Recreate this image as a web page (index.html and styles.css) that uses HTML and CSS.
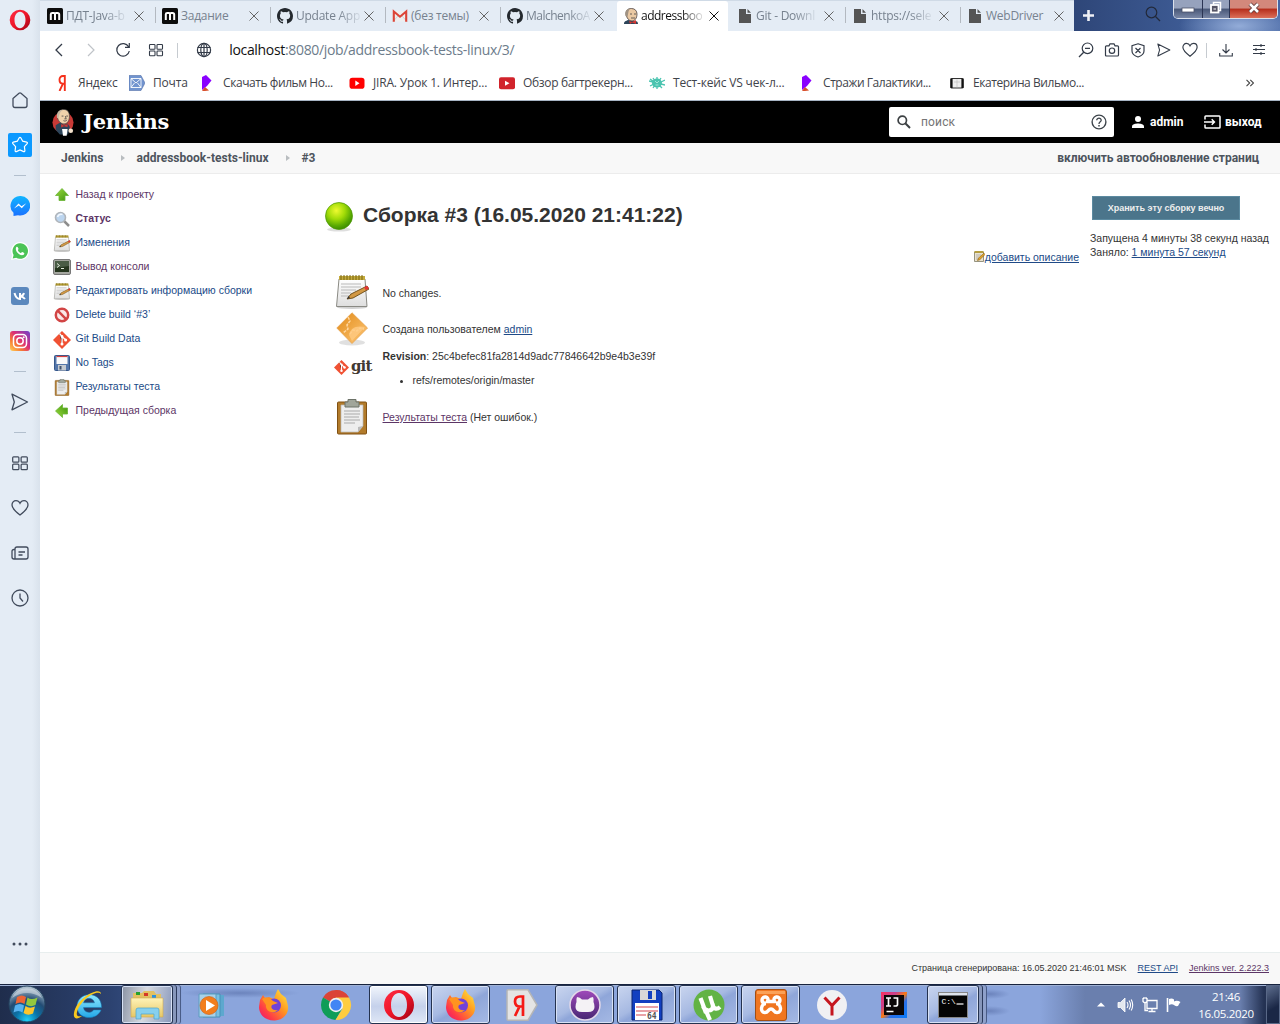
FILE: index.html
```html
<!DOCTYPE html>
<html lang="ru">
<head>
<meta charset="utf-8">
<title>addressbook-tests-linux #3 [Jenkins]</title>
<link rel="stylesheet" href="styles.css">
</head>
<body>
<svg class="defs" aria-hidden="true">
<defs>
<linearGradient id="gOpera" x1="0" y1="0" x2="1" y2="1"><stop offset="0" stop-color="#ff2d45"/><stop offset=".5" stop-color="#ee1528"/><stop offset="1" stop-color="#9c0014"/></linearGradient>
<linearGradient id="gMsg" x1="0" y1="0" x2="0" y2="1"><stop offset="0" stop-color="#10b5ff"/><stop offset="1" stop-color="#1a72ff"/></linearGradient>
<linearGradient id="gInsta" x1="0" y1="1" x2="1" y2="0"><stop offset="0" stop-color="#ffd35a"/><stop offset=".3" stop-color="#f77b34"/><stop offset=".55" stop-color="#dd2f75"/><stop offset="1" stop-color="#6b41cf"/></linearGradient>
<linearGradient id="gGreen" x1="0" y1="0" x2="1" y2="1"><stop offset="0" stop-color="#9bdb3c"/><stop offset="1" stop-color="#3f9410"/></linearGradient>
<radialGradient id="gBall" cx=".4" cy=".3" r=".7"><stop offset="0" stop-color="#eefa30"/><stop offset=".45" stop-color="#a2dc08"/><stop offset=".8" stop-color="#5aaa02"/><stop offset="1" stop-color="#3f8f02"/></radialGradient>
<radialGradient id="gOrb" cx=".5" cy=".95" r=".9"><stop offset="0" stop-color="#1ed0f8"/><stop offset=".35" stop-color="#0a73a8"/><stop offset=".65" stop-color="#234c74"/><stop offset="1" stop-color="#a9bccb"/></radialGradient>
<linearGradient id="gIe" x1="0" y1="0" x2="0" y2="1"><stop offset="0" stop-color="#8fe8ff"/><stop offset="1" stop-color="#23a7e8"/></linearGradient>
<linearGradient id="gFox" x1="1" y1="0" x2="0" y2="1"><stop offset="0" stop-color="#fff24a"/><stop offset=".4" stop-color="#ff9a20"/><stop offset=".75" stop-color="#ff3a47"/><stop offset="1" stop-color="#e2127d"/></linearGradient>
<linearGradient id="gGh" x1="0" y1="0" x2="0" y2="1"><stop offset="0" stop-color="#a14abb"/><stop offset="1" stop-color="#462672"/></linearGradient>
<linearGradient id="gDia" x1="0" y1="0" x2="1" y2="1"><stop offset="0" stop-color="#e18a17"/><stop offset="1" stop-color="#ffc878"/></linearGradient>
<linearGradient id="gPaper" x1="0" y1="0" x2="0" y2="1"><stop offset="0" stop-color="#fff"/><stop offset="1" stop-color="#dedede"/></linearGradient>
<linearGradient id="gFolder" x1="0" y1="0" x2="0" y2="1"><stop offset="0" stop-color="#fff3b8"/><stop offset="1" stop-color="#e6c766"/></linearGradient>
<linearGradient id="gIj" x1="0" y1="0" x2="1" y2="1"><stop offset="0" stop-color="#fe315d"/><stop offset=".3" stop-color="#c8408f"/><stop offset=".5" stop-color="#f97a12"/><stop offset=".65" stop-color="#2a6fe8"/><stop offset="1" stop-color="#087cfa"/></linearGradient>

<symbol id="i-x" viewBox="0 0 10 10"><path d="M.5.5l9 9M9.500.5l-9 9" fill="none" stroke="currentColor" stroke-width="1"/></symbol>
<symbol id="i-m" viewBox="0 0 16 16"><rect width="16" height="16" rx="1.500" fill="#0c0c0c"/><path d="M3.800 12V6.300c0-1 .7-1.300 1.500-1.300H7c.8 0 1 .5 1 1.300V12M8 6.300C8 5.400 8.500 5 9.200 5h1.300c1 0 1.700.5 1.700 1.500V12" fill="none" stroke="#fff" stroke-width="2"/></symbol>
<symbol id="i-gh" viewBox="0 0 16 16"><path fill="#24292e" d="M8 0C3.580 0 0 3.580 0 8c0 3.540 2.290 6.530 5.470 7.590.4.070.55-.17.55-.38v-1.490c-2.230.48-2.690-.94-2.690-.94-.36-.93-.89-1.170-.89-1.170-.73-.5.05-.49.05-.49.81.06 1.230.83 1.230.83.72 1.230 1.880.87 2.340.67.070-.52.28-.87.51-1.070-1.780-.2-3.640-.89-3.640-3.950 0-.87.31-1.590.82-2.150-.08-.2-.36-1.020.08-2.120 0 0 .67-.21 2.200.82a7.600 7.600 0 0 1 4 0c1.530-1.040 2.200-.82 2.200-.82.44 1.100.16 1.920.08 2.120.51.56.82 1.270.82 2.150 0 3.070-1.870 3.750-3.650 3.950.29.25.54.73.54 1.480v2.200c0 .21.15.46.55.38A8 8 0 0 0 16 8c0-4.420-3.580-8-8-8z"/></symbol>
<symbol id="i-gmail" viewBox="0 0 16 16"><path d="M1 3h14v10.500H1z" fill="#eee"/><path d="M1 13.500L6 8M15 13.500L10 8" stroke="#ccc" stroke-width=".8"/><path d="M1.800 13.800V3.500L8 8.700l6.200-5.200v10.300" fill="none" stroke="#dc4437" stroke-width="2.100"/></symbol>
<symbol id="i-file" viewBox="0 0 16 16"><path d="M2 1h7v5h5v9H2zM10.500 1L14 4.800h-3.500z" fill="#555"/></symbol>
<symbol id="i-butler" viewBox="0 0 24 30"><circle cx="12" cy="15" r="11.500" fill="#c93a36"/><path d="M6 9C6 3 9 .8 13 .8S19 4 19 8c0 5-2 8.500-6 8.500S6 12 6 9z" fill="#efd2ab" stroke="#444" stroke-width=".8"/><path d="M5.500 10C4.500 4 7.500 1 11.500 1 9 3 8.500 5 7 10z" fill="#c7b8a3"/><path d="M4 18l5-3 4 3 4-2 2.500 4-2 8-9 0-4.500-5z" fill="#2d455a"/><path d="M10 16.500l3 2 4-2v3.500l-4-1-3 1.500z" fill="#d33833"/><path d="M11 22h6l-1 7.500h-4z" fill="#fff"/><circle cx="20.500" cy="24" r="2.500" fill="#f4e2cc"/><path d="M10.500 8h2m3 0h2m-5 5c2 1 3 0 4-1M14.500 8l1 3h-2" stroke="#444" stroke-width=".9" fill="none"/></symbol>
<symbol id="i-butlerhead" viewBox="0 0 16 16"><path d="M1 16c0-3 2-3 4-4l7 1c2 0 3 1 3 3z" fill="#2d455a"/><path d="M3 6C3 2 5 .5 8.500.5S14 3 14 6c0 4-2 7-5 7S3.500 10 3 6z" fill="#eac9a3" stroke="#494040" stroke-width=".8"/><path d="M2.500 8C1.500 3 4 1 7 .8 5 3 5.500 5 4.500 9z" fill="#a19383"/><path d="M6 13l3 1 4-2v4l-4-1.500L7 16z" fill="#d33833"/><path d="M7 6h2m2 0h2M8 10h4" stroke="#444" stroke-width=".8"/></symbol>
<symbol id="i-grid" viewBox="0 0 16 16"><g fill="none" stroke="currentColor" stroke-width="1.100"><rect x="1.500" y="2.500" width="5.500" height="4.800" rx=".8"/><rect x="9" y="2.500" width="5.500" height="4.800" rx=".8"/><rect x="1.500" y="9" width="5.500" height="4.800" rx=".8"/><rect x="9" y="9" width="5.500" height="4.800" rx=".8"/></g></symbol>
<symbol id="i-send" viewBox="0 0 18 18"><path d="M1 1.200L16.500 9 1 16.800 3.300 9z" fill="none" stroke="currentColor" stroke-width="1.300" stroke-linejoin="round"/></symbol>
<symbol id="i-heart" viewBox="0 0 18 18"><path d="M9 16C5 13 1 9.500 1 6c0-2.500 1.700-4.400 4-4.400 1.800 0 3.200 1 4 2.700.8-1.700 2.200-2.700 4-2.700 2.300 0 4 1.900 4 4.400 0 3.500-4 7-8 10z" fill="none" stroke="currentColor" stroke-width="1.300"/></symbol>
<symbol id="i-purple" viewBox="0 0 16 16"><path d="M3 2l4-2 5.500 5.500L8 11l-5 4z" fill="#8a00ff"/><path d="M3 16l3-4 4 3.500-4 .5z" fill="#d8502c"/></symbol>
<symbol id="i-notepad" viewBox="0 0 34 34"><ellipse cx="17" cy="32.500" rx="15" ry="1.500" fill="#000" opacity=".18"/><path d="M4 4h26l2 27.500H1.500z" fill="url(#gPaper)" stroke="#8a8a84" stroke-width="1"/><path d="M4 1h26v4H4z" fill="#c3aa3d"/><path d="M6 0v5m3-5v5m3-5v5m3-5v5m3-5v5m3-5v5m3-5v5m3-5v5" stroke="#796411" stroke-width="1"/><path d="M6 9h20M6 12h20M6 15h15M6 18h10M6 21h9" stroke="#b9b9b9"/><path d="M12 24l4-5L32 11l2 3-16 9z" fill="#d29844" stroke="#684713" stroke-width=".9"/><path d="M29 12.500l3-1.800 2 2.500-3 2z" fill="#e23434"/><path d="M12 24l3-1-1.500-2z" fill="#333"/></symbol>
<symbol id="i-clip" viewBox="0 0 34 36"><rect x="2.500" y="3" width="29" height="32" rx="1" fill="#b27b2b" stroke="#805012"/><path d="M6 6h22v21l-5 6H6z" fill="#eee" stroke="#b8b8b8" stroke-width=".7"/><path d="M28 27l-5 6v-5z" fill="#bbb"/><path d="M9 12h16M9 15h16M9 18h15M9 21h16M9 24h11" stroke="#aaa" stroke-width="1.100"/><path d="M10 3h3V.5h8V3h3v5H10z" fill="#a0a59a" stroke="#6c7268"/></symbol>
<symbol id="i-git" viewBox="0 0 18 18"><path d="M9 0l9 9-9 9-9-9z" fill="#f05133"/><path d="M6.500 2.500L9 5.500v7M9 5.500l3.500 3.200" stroke="#fff" stroke-width="1.300"/><circle cx="9" cy="13" r="1.500" fill="#fff"/><circle cx="12.600" cy="9" r="1.500" fill="#fff"/><circle cx="9" cy="5.500" r="1.400" fill="#fff"/></symbol>
<symbol id="i-up" viewBox="0 0 16 16"><path d="M8 1.500l6.500 7h-3.500V13.500H5V8.500H1.500z" fill="url(#gGreen)" stroke="#6bb536" stroke-width=".8"/></symbol>
<symbol id="i-fox" viewBox="0 0 32 32"><path d="M2 11l3-5 2 3 4-1 5 2 2-6 2-4 3 5 5 4 2 8c1 8-5 14-13 14.500C8 32 1 26 1 18z" fill="url(#gFox)"/><circle cx="16" cy="16.500" r="7" fill="#7142d8"/><path d="M4 10c4-3 8-1 11 2l5 2-6 2c-2 3 1 6 6 5-5 5-13 1-12-5z" fill="#ff9420"/></symbol>
<symbol id="i-oo" viewBox="0 0 32 32"><path fill="url(#gOpera)" fill-rule="evenodd" d="M16 1a15 15 0 1 0 0 30 15 15 0 0 0 0-30zm0 3c5 0 8 5.400 8 12s-3 12-8 12-8-5.400-8-12 3-12 8-12z"/></symbol>
</defs>
</svg>

<div class="window">
  <aside class="rail">
    <div class="rail-logo"><svg width="22" height="22"><use href="#i-oo"/></svg></div>
    <div class="rail-item"><svg width="18" height="18" viewBox="0 0 18 18"><path d="M2 7.500L8 2.300q1-.8 2 0l6 5.200v7q0 2-2 2H4q-2 0-2-2z" fill="none" stroke="currentColor" stroke-width="1.300"/></svg></div>
    <div class="rail-item"><svg width="24" height="24" viewBox="0 0 24 24"><rect width="24" height="24" rx="2" fill="#0b99ff"/><path d="M11.200 4.800q.8-1 1.600 0l1.900 3.400 4 .9q1.200.4.400 1.500l-2.700 3 .5 4.200q-.1 1.200-1.200.8L12 16.900l-3.700 1.700q-1.100.4-1.200-.8l.5-4.200-2.700-3q-.8-1.100.4-1.500l4-.9z" fill="none" stroke="#fff" stroke-width="1.200"/></svg></div>
    <div class="rail-line"></div>
    <div class="rail-item"><svg width="20" height="20" viewBox="0 0 20 20"><path d="M10 0a9.800 9.800 0 1 1-2 19.300L3.500 20v-3.200A9.800 9.800 0 0 1 10 0z" fill="url(#gMsg)"/><path d="M4 12.500L8.500 7.500l3 2.800 4.800-3-4.500 5-3-2.700z" fill="#fff"/></svg></div>
    <div class="rail-item"><svg width="18" height="18" viewBox="0 0 18 18"><path d="M9 0a9 9 0 1 1-4 17L0 18l1.200-4.700A9 9 0 0 1 9 0z" fill="#fff"/><path d="M9 1.200a7.800 7.800 0 1 1-3.800 14.500l-3.500.8.900-3.500A7.800 7.800 0 0 1 9 1.200z" fill="#4cc457"/><path d="M5.200 5.300c1-1 1.600-.4 2.300 1.500.2.600-.8 1-.5 1.600.7 1.300 1.600 2.100 2.800 2.600.6 0 1-1.200 1.500-1 1.800.8 2.300 1 1.900 1.900-.8 1.800-3 1.500-5 .4C5.800 10.800 4 7.500 5.200 5.300z" fill="#fff"/></svg></div>
    <div class="rail-item"><svg width="18" height="18" viewBox="0 0 18 18"><rect width="18" height="18" rx="3" fill="#5b88bd"/><path d="M3.500 6C4.500 10 6.500 12 9 12V6m0 3.200c2 0 3.500-1.500 4-3.200M9 9.200c2.500.3 3.800 1.300 5 2.800" stroke="#fff" stroke-width="2" fill="none"/></svg></div>
    <div class="rail-item"><svg width="20" height="20" viewBox="0 0 20 20"><rect width="20" height="20" rx="3" fill="url(#gInsta)"/><g fill="none" stroke="#fff" stroke-width="1.500"><rect x="3.500" y="3.500" width="13" height="13" rx="3.800"/><circle cx="10" cy="10" r="3.200"/></g><circle cx="13.700" cy="6.300" r="1" fill="#fff"/></svg></div>
    <div class="rail-line"></div>
    <div class="rail-item"><svg width="18" height="18"><use href="#i-send"/></svg></div>
    <div class="rail-line"></div>
    <div class="rail-item"><svg width="18" height="18"><use href="#i-grid"/></svg></div>
    <div class="rail-item"><svg width="18" height="18"><use href="#i-heart"/></svg></div>
    <div class="rail-item"><svg width="18" height="18" viewBox="0 0 18 18"><path d="M4 5.500H3q-2 0-2 2V13q0 2 2 2h12q2 0 2-2V5q0-2-2-2H6Q4 3 4 5zV15M7.500 8h6.500M7.500 11h4" fill="none" stroke="currentColor" stroke-width="1.300"/></svg></div>
    <div class="rail-item"><svg width="18" height="18" viewBox="0 0 18 18"><circle cx="9" cy="9" r="8" fill="none" stroke="currentColor" stroke-width="1.300"/><path d="M9 4.500V9l3 3.500" fill="none" stroke="currentColor" stroke-width="1.300"/></svg></div>
    <div class="rail-more"><svg width="16" height="4" viewBox="0 0 16 4"><g fill="#414b5c"><circle cx="2" cy="2" r="1.500"/><circle cx="8" cy="2" r="1.500"/><circle cx="14" cy="2" r="1.500"/></g></svg></div>
  </aside>

  <main class="main">
    <div class="tabs">
      <div class="tab"><svg width="16" height="16"><use href="#i-m"/></svg><span>ПДТ-Java-b</span><svg class="x" width="10" height="10"><use href="#i-x"/></svg></div>
      <div class="tab short"><svg width="16" height="16"><use href="#i-m"/></svg><span>Задание</span><svg class="x" width="10" height="10"><use href="#i-x"/></svg></div>
      <div class="tab"><svg width="16" height="16"><use href="#i-gh"/></svg><span>Update App</span><svg class="x" width="10" height="10"><use href="#i-x"/></svg></div>
      <div class="tab short"><svg width="16" height="16"><use href="#i-gmail"/></svg><span>(без темы)</span><svg class="x" width="10" height="10"><use href="#i-x"/></svg></div>
      <div class="tab"><svg width="16" height="16"><use href="#i-gh"/></svg><span class="tight">MalchenkoA</span><svg class="x" width="10" height="10"><use href="#i-x"/></svg></div>
      <div class="tab active"><svg width="16" height="16"><use href="#i-butlerhead"/></svg><span class="tight">addressboo</span><svg class="x" width="10" height="10"><use href="#i-x"/></svg></div>
      <div class="tab"><svg width="16" height="16"><use href="#i-file"/></svg><span>Git - Downl</span><svg class="x" width="10" height="10"><use href="#i-x"/></svg></div>
      <div class="tab"><svg width="16" height="16"><use href="#i-file"/></svg><span>https://sele</span><svg class="x" width="10" height="10"><use href="#i-x"/></svg></div>
      <div class="tab last"><svg width="16" height="16"><use href="#i-file"/></svg><span>WebDriver</span><svg class="x" width="10" height="10"><use href="#i-x"/></svg></div>
      <div class="frame">
        <svg class="plus" width="13" height="13" viewBox="0 0 13 13"><path d="M6.500 1v11M1 6.500h11" stroke="#eef0f5" stroke-width="2.600"/></svg>
        <svg class="tabsearch" width="16" height="16" viewBox="0 0 16 16"><circle cx="6.500" cy="6.500" r="5.300" fill="none" stroke="#22293a" stroke-width="1.200"/><path d="M10.500 10.500L15 15" stroke="#22293a" stroke-width="1.300"/></svg>
        <div class="winbtns">
          <span class="wb"><svg width="14" height="18" viewBox="0 0 14 18"><rect x="1" y="8" width="12" height="4" fill="#fff" stroke="#4b5269" stroke-width=".8"/></svg></span>
          <span class="wb"><svg width="14" height="18" viewBox="0 0 14 18"><path d="M4.500 4.500v-2h7v8h-2" fill="none" stroke="#fff" stroke-width="1.500"/><rect x="2" y="5" width="7.500" height="7.500" fill="#556" stroke="#fff" stroke-width="1.800"/><path d="M4.500 9h2.500" stroke="#fff"/></svg></span>
          <span class="wb close"><svg width="14" height="18" viewBox="0 0 14 18"><path d="M3 4l8 8M11 4L3 12" stroke="#5b3737" stroke-width="4.200"/><path d="M3 4l8 8M11 4L3 12" stroke="#fff" stroke-width="2.600"/></svg></span>
        </div>
      </div>
    </div>

    <div class="nav">
      <svg width="16" height="16" viewBox="0 0 16 16"><path d="M11 2L5 8l6 6" fill="none" stroke="#333b48" stroke-width="1.300"/></svg>
      <svg width="16" height="16" viewBox="0 0 16 16"><path d="M5 2l6 6-6 6" fill="none" stroke="#bfc3c8" stroke-width="1.200"/></svg>
      <svg width="16" height="16" viewBox="0 0 16 16"><path d="M13.600 4.800A6.300 6.300 0 1 0 14.300 9M14.300 1v4.300H10" fill="none" stroke="#333b48" stroke-width="1.200"/></svg>
      <svg width="16" height="16"><use href="#i-grid"/></svg>
      <i class="bar"></i>
      <svg class="globe" width="16" height="16" viewBox="0 0 16 16"><g fill="none" stroke="#333b48" stroke-width="1.200"><circle cx="8" cy="8" r="6.600"/><ellipse cx="8" cy="8" rx="3.200" ry="6.600"/><path d="M8 1v14M1.500 5.500h13M1.500 10.500h13"/></g></svg>
      <div class="url"><b>localhost</b>:8080/job/addressbook-tests-linux/3/</div>
      <div class="nav-right">
        <svg width="16" height="16" viewBox="0 0 16 16"><circle cx="9.500" cy="6.300" r="5.300" fill="none" stroke="currentColor" stroke-width="1.200"/><path d="M5.700 10.200L1 15M7 6.300h5" stroke="currentColor" stroke-width="1.300"/></svg>
        <svg width="16" height="16" viewBox="0 0 16 16"><g fill="none" stroke="currentColor" stroke-width="1.200"><path d="M2.500 3.800H5l1-2h4l1 2h2.500q1 0 1 1V13q0 1-1 1h-11q-1 0-1-1V4.800q0-1 1-1z"/><circle cx="8" cy="8.700" r="2.700"/></g></svg>
        <svg width="16" height="16" viewBox="0 0 16 16"><g fill="none" stroke="currentColor" stroke-width="1.200"><path d="M8 1.800l6 1.900V9c0 3-3 5-6 6-3-1-6-3-6-6V3.700zM5.500 6l5 5M10.500 6l-5 5"/></g></svg>
        <svg width="16" height="14"><use href="#i-send"/></svg>
        <svg width="16" height="16"><use href="#i-heart"/></svg>
        <i class="bar"></i>
        <svg width="16" height="16" viewBox="0 0 16 16"><path d="M8 2v9M4.500 7.500L8 11l3.500-3.500M1.700 11v3h12.600v-3" fill="none" stroke="currentColor" stroke-width="1.100"/></svg>
        <svg class="sliders" width="14" height="14" viewBox="0 0 14 14"><path d="M1 2.500h12M1 6.500h12M1 10.500h12M9 1v3M4 5v3M9 9v3" stroke="currentColor" stroke-width="1.100"/></svg>
      </div>
    </div>

    <div class="marks">
      <div class="mk m1"><svg width="16" height="16" viewBox="0 0 16 16"><path d="M10.800 16V1H9C6.800 1 5.500 2.600 5.500 4.800S6.800 8.700 9 8.700h1.800M9 8.700L5.500 16" fill="none" stroke="#f5301b" stroke-width="1.900"/></svg><span>Яндекс</span></div>
      <div class="mk m2"><svg width="16" height="16" viewBox="0 0 16 16"><path d="M0 .5h12l4 7.500-4 7.500H0z" fill="#7194cf" stroke="#5470a8" stroke-width=".6"/><path d="M2 3.500h10v9H2zM2 3.500l5 4.500 5-4.500M2 12.500L5.500 8M12 12.500L8.500 8" fill="none" stroke="#fff" stroke-width=".9"/></svg><span>Почта</span></div>
      <div class="mk n"><svg width="16" height="16"><use href="#i-purple"/></svg><span>Скачать фильм Но...</span></div>
      <div class="mk"><svg width="16" height="16" viewBox="0 0 16 16"><rect x=".5" y="2.700" width="15" height="11" rx="2.800" fill="#f00"/><path d="M6.300 5.500l4.200 2.700-4.200 2.700z" fill="#fff"/></svg><span>JIRA. Урок 1. Интер...</span></div>
      <div class="mk o"><svg width="16" height="16" viewBox="0 0 16 16"><rect y="2.200" width="16" height="12" rx="2" fill="#d1232b"/><path d="M6 5.800l4.500 2.500L6 10.700z" fill="#fff"/></svg><span>Обзор багтрекерн...</span></div>
      <div class="mk"><svg width="16" height="16" viewBox="0 0 16 16"><ellipse cx="8" cy="8" rx="5" ry="4.500" fill="#4bc4b0"/><path d="M0 6l4 1M1 11l4-2M4 3l2 3M8 2v3M12 3l-2 3M16 5l-4 2M16 10l-4-1M13 13l-3-3M8 14v-3M4 13l2-3M1 4l3 2" stroke="#4bc4b0" stroke-width="1.300"/><path d="M6 6l2 2 2-2M6.500 10h3" stroke="#b9efe2" stroke-width=".8" fill="none"/></svg><span>Тест-кейс VS чек-л...</span></div>
      <div class="mk n"><svg width="16" height="16"><use href="#i-purple"/></svg><span>Стражи Галактики...</span></div>
      <div class="mk n"><svg width="16" height="16" viewBox="0 0 16 16"><rect x="2" y="3.500" width="12" height="9.500" rx="1" fill="#eee" stroke="#333" stroke-width="1.200"/><path d="M2.500 3.500v9.500M13.500 3.500v9.500" stroke="#111" stroke-width="2.200"/><path d="M8 4.500v8M5 7h6" stroke="#bbb" stroke-width=".6"/></svg><span>Екатерина Вильмо...</span></div>
      <svg class="more" width="8" height="8" viewBox="0 0 8 8"><path d="M.5.8L3.700 4 .5 7.200M4.300.8L7.500 4 4.300 7.200" fill="none" stroke="#444" stroke-width="1.100"/></svg>
    </div>

    <header class="jh">
      <svg width="22" height="29"><use href="#i-butler"/></svg>
      <span class="brand">Jenkins</span>
      <div class="search"><svg width="14" height="14" viewBox="0 0 14 14"><circle cx="5.300" cy="5.300" r="4.200" fill="none" stroke="#3c4043" stroke-width="1.700"/><path d="M8.300 8.300L13 13" stroke="#3c4043" stroke-width="2"/></svg><span>поиск</span><svg width="16" height="16" viewBox="0 0 16 16"><circle cx="8" cy="8" r="6.900" fill="none" stroke="#3d444b" stroke-width="1.400"/><path d="M5.700 6.300C5.700 3.400 10.300 3.500 10.200 6.200 10.200 7.800 8 7.800 8 10" fill="none" stroke="#3d444b" stroke-width="1.300"/><path d="M8 11v1.500" stroke="#3d444b" stroke-width="1.500"/></svg></div>
      <svg class="user" width="12" height="12" viewBox="0 0 12 12"><circle cx="6" cy="3" r="3" fill="#fff"/><path d="M0 12v-1.500C0 8.300 3.500 7.500 6 7.500s6 .8 6 3V12z" fill="#fff"/></svg>
      <span class="jl admin">admin</span>
      <svg class="out" width="17" height="14" viewBox="0 0 17 14"><path d="M1 4.500V1.800Q1 1 1.800 1h13.400q.8 0 .8.800v10.400q0 .8-.8.800H1.800q-.8 0-.8-.8V9.500M0 7h10M7.700 4.300L10.400 7 7.700 9.700" fill="none" stroke="#fff" stroke-width="1.500"/></svg>
      <span class="jl exit">выход</span>
    </header>

    <nav class="crumbs"><span class="c1">Jenkins</span><i></i><span class="c2">addressbook-tests-linux</span><i></i><span>#3</span><span class="auto">включить автообновление страниц</span></nav>

    <section class="page">
      <div class="tasks">
        <a class="v"><svg width="16" height="16"><use href="#i-up"/></svg><span>Назад к проекту</span></a>
        <a class="v cur"><svg width="16" height="16" viewBox="0 0 16 16"><path d="M10 10l5 5" stroke="#8d8d8d" stroke-width="2.500"/><circle cx="6.500" cy="6.500" r="5" fill="#bcd5ef" stroke="#b0b5ba" stroke-width="1.600"/><path d="M3.500 6c1-2.500 3-3 5-2.500" stroke="#f2f8ff" stroke-width="1.500" fill="none"/></svg><span>Статус</span></a>
        <a><svg width="17" height="17"><use href="#i-notepad"/></svg><span>Изменения</span></a>
        <a class="v"><svg width="18" height="16" viewBox="0 0 18 16"><rect x=".5" y=".5" width="17" height="15" rx="1.500" fill="#a5a7a0" stroke="#777"/><rect x="2" y="2" width="14" height="11" fill="#26361f"/><path d="M2 2h14v5L2 9z" fill="#4a5c45"/><path d="M4 4.500l2.500 2L4 8.500M8 9.500h3" fill="none" stroke="#e6eee0"/></svg><span>Вывод консоли</span></a>
        <a><svg width="17" height="17"><use href="#i-notepad"/></svg><span>Редактировать информацию сборки</span></a>
        <a><svg width="16" height="16" viewBox="0 0 16 16"><circle cx="8" cy="8" r="6.200" fill="#fbe9e9" stroke="#d24545" stroke-width="2.500"/><path d="M3.700 3.700l8.600 8.600" stroke="#d24545" stroke-width="2.400"/></svg><span>Delete build ‘#3’</span></a>
        <a><svg width="18" height="18"><use href="#i-git"/></svg><span>Git Build Data</span></a>
        <a><svg width="16" height="16" viewBox="0 0 16 16"><rect x=".5" y=".5" width="15" height="15" rx="1" fill="#5577aa" stroke="#36588c"/><rect x="2.500" y="1" width="11" height="8" fill="#fafafa"/><path d="M2.500 1.500h11" stroke="#d84040" stroke-width="1.200"/><rect x="4" y="10" width="8" height="5.500" fill="#c5cad0"/><rect x="5.500" y="11" width="2" height="3.500" fill="#41536e"/></svg><span>No Tags</span></a>
        <a><svg width="16" height="17"><use href="#i-clip"/></svg><span>Результаты теста</span></a>
        <a class="v"><svg class="left" width="16" height="16"><use href="#i-up"/></svg><span>Предыдущая сборка</span></a>
      </div>
      <div class="content">
        <h1><svg width="30" height="32" viewBox="0 0 30 32"><ellipse cx="15" cy="28.500" rx="12" ry="2" fill="#000" opacity=".13"/><circle cx="15" cy="15" r="13.500" fill="url(#gBall)" stroke="#4b9700" stroke-width=".7"/></svg><span>Сборка #3 (16.05.2020 21:41:22)</span></h1>
        <div class="rows">
          <div class="row r1"><svg width="34" height="34"><use href="#i-notepad"/></svg><p>No changes.</p></div>
          <div class="row r2"><svg width="32" height="34" viewBox="0 0 32 34"><ellipse cx="16" cy="30.500" rx="13" ry="3" fill="#000" opacity=".12"/><path d="M16 .8L31.500 16 16 31.500.8 16z" fill="url(#gDia)" stroke="#e6a14b" stroke-width=".8"/><path d="M12 5l2 4-3 4 1 4-5 4m7 1l3-4 4 1 3-3 4 1" fill="none" stroke="#ffd79f" stroke-width="1.500" stroke-dasharray="3 1"/><path d="M13 23c1-7 7-10 16-8L16 29z" fill="#ffca83" opacity=".8"/></svg><p>Создана пользователем <a>admin</a></p></div>
          <div class="row r3"><div class="gitlogo"><svg width="15" height="15"><use href="#i-git"/></svg><span>git</span></div><div><p><b>Revision</b>: 25c4befec81fa2814d9adc77846642b9e4b3e39f</p><ul><li>refs/remotes/origin/master</li></ul></div></div>
          <div class="row r4"><svg width="34" height="36"><use href="#i-clip"/></svg><p><a class="v">Результаты теста</a> (Нет ошибок.)</p></div>
        </div>
      </div>
      <div class="desc"><svg width="11" height="11" viewBox="0 0 11 11"><path d="M.5 1h9v9.500h-9z" fill="#e9e2cf" stroke="#8b8873" stroke-width=".9"/><path d="M.5 1h9" stroke="#b39a34" stroke-width="1.800"/><path d="M2 4h5M2 6h3M2 8h2" stroke="#aaa" stroke-width=".8"/><path d="M3.500 9.500l1-2.500L10 2.200l1 1.300-5.200 5.200z" fill="#e0a22c" stroke="#8c6114" stroke-width=".6"/></svg><a>добавить описание</a></div>
      <div class="side">
        <button>Хранить эту сборку вечно</button>
        <p>Запущена 4 минуты 38 секунд назад<br>Заняло: <a>1 минута 57 секунд</a></p>
      </div>
    </section>

    <footer><span class="gen">Страница сгенерирована: 16.05.2020 21:46:01 MSK</span><a class="rest">REST API</a><a class="v ver">Jenkins ver. 2.222.3</a></footer>
  </main>
</div>

<div class="taskbar">
  <div class="start"><svg width="38" height="38" viewBox="0 0 38 38"><circle cx="19" cy="19" r="18" fill="url(#gOrb)" stroke="#24435f"/><path d="M9 12q5-3 9 0l-1.500 7q-4-3-9 0z" fill="#ec6435"/><path d="M19.500 12.500q4 3 10 0l-2 7.500q-5 2.500-9.500-.5z" fill="#92c83e"/><path d="M7 20.500q5-3 9 0l-1.500 7q-4-3-9 0z" fill="#57b2f0"/><path d="M17.500 21q4 3 9.500.5l-2 7q-5 2.500-9.500-.5z" fill="#fbc52c"/><path d="M4 13A16.500 16.500 0 0 1 34 13Q19 3 4 13z" fill="#fff" opacity=".4"/></svg></div>
  <div class="slot"><svg width="32" height="32" viewBox="0 0 32 32"><path fill-rule="evenodd" d="M29.500 18.500H11.500c.5 5.500 8 6.500 10 2.500h7.500c-4 11-24 10-24-3.500C5 2 30 1 29.500 18.500zM11.500 13.800h11c-1-6-10-6-11 0z" fill="url(#gIe)" stroke="#1680bd" stroke-width=".5"/><path d="M29 5c0-8-24 3-27 19-1 6 3 7 8 3-4 1-6 0-5-4C8 12 24 0 29 5z" fill="#f9c91e"/></svg></div>
  <div class="slot btn grey stack"><svg width="34" height="32" viewBox="0 0 34 32"><path d="M3 4h9l2-2h10l2 3h5v20H3z" fill="#e2c162"/><path d="M6 3h4v3H6z" fill="#25a02c"/><path d="M14 4h4v3h-4z" fill="#d53827"/><path d="M22 6h4v3h-4z" fill="#2d91de"/><path d="M1 9h32v19H1z" fill="url(#gFolder)" stroke="#cda950" stroke-width=".6"/><path d="M6 30V21q0-2 2-2h19q2 0 2 2v9h-5v-5H11v5z" fill="#86d0ee" stroke="#4ca5cc" stroke-width=".7"/></svg></div>
  <div class="slot"><svg width="30" height="28" viewBox="0 0 30 28"><path d="M10 4h17v21H10z" fill="#5da8ce"/><path d="M6 3h17v23H6z" fill="#7bc0df" stroke="#4990b8"/><path d="M2 3h17v23H2z" fill="#a7d2e9" stroke="#5d9cc0"/><circle cx="12" cy="14.500" r="9" fill="#f27e1d" stroke="#d05b0c" stroke-width=".6"/><path d="M9 9l9 5.500L9 20z" fill="#fff"/></svg></div>
  <div class="slot"><svg width="32" height="32"><use href="#i-fox"/></svg></div>
  <div class="slot"><svg width="32" height="32" viewBox="0 0 32 32"><path d="M16 16L3 8.500A15 15 0 0 1 29 8.500z" fill="#db4437"/><path d="M16 1a15 15 0 0 1 13 7.500H16z" fill="#db4437"/><path d="M16 16L3 8.500A15 15 0 0 0 15.500 31L22 20z" fill="#0f9d58"/><path d="M16 8.500h13A15 15 0 0 1 15.500 31L22.500 19.700z" fill="#ffcd40"/><circle cx="16" cy="16" r="7.200" fill="#f1f1f1"/><circle cx="16" cy="16" r="5.600" fill="#4285f4"/></svg></div>
  <div class="slot btn bright"><svg width="32" height="32"><use href="#i-oo"/></svg></div>
  <div class="slot btn"><svg width="32" height="32"><use href="#i-fox"/></svg></div>
  <div class="slot"><svg width="32" height="32" viewBox="0 0 32 32"><path d="M2 .8h20L31 16l-9 15.200H2q-1 0-1-1V2q0-1.200 1-1.200z" fill="#e4e4e4" stroke="#b5b5b5" stroke-width="1.500"/><path d="M17 27V7.500H14c-3.500 0-5 2-5 5s1.800 5 5 5h3M13.500 17.500L9 27" fill="none" stroke="#f51a16" stroke-width="2.700"/></svg></div>
  <div class="slot btn"><svg width="32" height="32" viewBox="0 0 32 32"><circle cx="16" cy="16" r="15" fill="url(#gGh)" stroke="#e3d9e9" stroke-width="1.500"/><path d="M8 8q3 0 5 2.500h6Q21 8 24 8q1 2 .5 5 1 2 1 5 0 5-6.500 5h-6q-6.500 0-6.500-5 0-3 1-5Q7 10 8 8z" fill="#f4f2f5"/></svg></div>
  <div class="slot btn"><svg width="32" height="32" viewBox="0 0 32 32"><path d="M1 1h27l3 3v27H1z" fill="#123fc0" stroke="#0b256e"/><path d="M9 1h16v10H9z" fill="#d8d8d8"/><path d="M17 2h4v8h-4z" fill="#123fc0"/><path d="M4 14h24v17H4z" fill="#fff"/><path d="M5 18h22M5 22h22M5 26h10" stroke="#d44750" stroke-width="1.200"/><text x="16" y="29.500" font-family="DejaVu Sans Mono" font-size="8" font-weight="700" fill="#555">64</text></svg></div>
  <div class="slot btn"><svg width="32" height="32" viewBox="0 0 32 32"><circle cx="16" cy="16" r="15.500" fill="#62b345"/><path d="M7.500 9l5.500 15M10 17c2 6 10 6 10 0L17 7M19.500 15c1 5 4 6 7.500 3M13 22l4 9" fill="none" stroke="#fff" stroke-width="4.200"/></svg></div>
  <div class="slot btn"><svg width="32" height="32" viewBox="0 0 32 32"><rect x=".5" y=".5" width="31" height="31" rx="2.500" fill="#f07620" stroke="#a14e13"/><path d="M2 2h28v3H2z" fill="#ffb36e" opacity=".7"/><path d="M16 12.500h-3.500C15 7 7 6.500 7 11c0 2.500 2 3.500 4 3.500-5 0-6.500 9-1 9 3.500 0 3-3.500 6-3.500s2.500 3.500 6 3.500c5.500 0 4-9-1-9 2 0 4-1 4-3.500 0-4.500-8-4-5.500 1.500z" fill="none" stroke="#fff" stroke-width="3.400"/></svg></div>
  <div class="slot"><svg width="32" height="32" viewBox="0 0 32 32"><circle cx="16" cy="16" r="15" fill="#f0f0f3"/><path d="M8.500 8.500L16 16.500l7.500-8M16 16v10.500" stroke="#c5161f" stroke-width="3" fill="none"/></svg></div>
  <div class="slot"><svg width="26" height="26" viewBox="0 0 26 26"><rect width="26" height="26" fill="url(#gIj)"/><path d="M3 3h20v20H3z" fill="#0b0708"/><path d="M5 6h5M7.500 6v8M5 14h5M12.500 6h4v6.500q0 1.500-2 1.500h-2M5.500 19.500h7" stroke="#fff" stroke-width="1.700" fill="none"/></svg></div>
  <div class="slot btn stack"><svg width="30" height="26" viewBox="0 0 30 26"><rect x=".5" y=".5" width="29" height="25" fill="#050505" stroke="#888"/><path d="M1 1h28v2.500H1z" fill="#dfe4ed"/><text x="3.500" y="12" font-family="Liberation Mono" font-size="8" fill="#fff">C:\</text><path d="M18.500 12h7" stroke="#fff" stroke-width="1.200"/></svg></div>
  <div class="tray">
    <svg width="8" height="5" viewBox="0 0 8 5"><path d="M0 4.500L4 .5l4 4z" fill="#fff"/></svg>
    <svg class="spk" width="17" height="16" viewBox="0 0 17 16"><path d="M1 5.500h2.500L8 1v14l-4.500-4.500H1z" fill="#e4e8ee" stroke="#fff" stroke-width=".8"/><path d="M10 5q2 3 0 6M12 3.500q3 4.500 0 9M14.200 2.500q3 5.500 0 11" fill="none" stroke="#fff" stroke-width="1.100"/></svg>
    <svg class="net" width="16" height="16" viewBox="0 0 16 16"><path d="M5 3.500h10v8H5zM10 11.500V14M6.500 14.500h7M3 6v7.500h3M1 1v3.500q2 2.500 4 0V1M2 0v2M4 0v2" fill="none" stroke="#fff" stroke-width="1.300"/></svg>
    <svg class="flag" width="15" height="16" viewBox="0 0 15 16"><path d="M1.500 1v14" stroke="#fff" stroke-width="1.600"/><path d="M3 2q3-1 5 .5v2q3-1.500 6.500.5-1 1-2.500 4-3 .5-4-1-2-1.500-5 0z" fill="#fff"/></svg>
    <div class="clock">21:46<br>16.05.2020</div>
    <div class="desk"></div>
  </div>
</div>
</body>
</html>
```
FILE: styles.css
```css
* { box-sizing: border-box; }
html, body { margin: 0; height: 1024px; overflow: hidden; }
body { width: 1280px; display: flex; flex-direction: column; font-family: "Liberation Sans", Arial, sans-serif; background: #fff; }
p { margin: 0; }
svg { display: block; flex: none; }
.defs { width: 0; height: 0; position: absolute; }
.window { display: flex; height: 984px; }

.rail { width: 40px; background: linear-gradient(90deg, #e4ecf5 80%, #d9e2ec); display: flex; flex-direction: column; align-items: center; color: #414b5c; padding-bottom: 38px; }
.rail-logo { height: 77.500px; padding-top: 9px; }
.rail-item { height: 45px; display: flex; align-items: center; }
.rail-line { height: 16px; display: flex; align-items: center; width: 12px; }
.rail-line::after { content: ""; width: 12px; height: 1px; background: #b2bfcd; }
.rail-more { margin-top: auto; }

.main { width: 1240px; display: flex; flex-direction: column; }
.tabs { height: 31px; background: #e4ecf5; border-top: 1px solid #cfdae6; display: flex; font-family: "Open Sans", "Noto Sans", sans-serif; }
.tab { width: 115px; padding: 0 11px 1px 7px; display: flex; align-items: center; color: #77828f; position: relative; font-size: 12px; letter-spacing: -.25px; }
.tab::after { content: ""; width: 1px; height: 16px; background: #b3b9c0; position: absolute; right: -1px; top: 6px; }
.tab span { margin-left: 3px; white-space: nowrap; -webkit-mask-image: linear-gradient(90deg, #000 65%, rgba(0,0,0,.15)); mask-image: linear-gradient(90deg, #000 65%, rgba(0,0,0,.15)); }
.tab.short span, .tab.last span { -webkit-mask-image: none; mask-image: none; }
.tab .tight { letter-spacing: -.5px; }
.tab .x { margin-left: auto; color: #666; }
.tab.active { width: 111px; margin: 0 2px; padding: 0 9px 1px 6px; background: #fff; color: #111; border-radius: 3px 3px 0 0; }
.tab.active .x { color: #111; }
.tab.active span { margin-left: 2px; }
.tab.active::after, .tab:nth-child(5)::after, .tab.last::after { display: none; }
.tab.last { width: 114px; padding-right: 10px; }
.frame { flex: 1; margin-top: -1px; display: flex; background: radial-gradient(ellipse 60px 22px at 165px 26px, #93acd8, transparent), linear-gradient(90deg, #2e4678, #3f5d97 60%, #4565a2); }
.plus { margin: 9px 0 0 8px; }
.tabsearch { margin: 6px 0 0 50px; }
.winbtns { display: flex; margin-left: 12px; height: 19px; width: 105px; border: 1px solid #dbe1ec; border-top: 0; border-radius: 0 0 5px 5px; overflow: hidden; }
.wb { width: 29px; display: flex; justify-content: center; border-right: 1px solid #2b3554; background: linear-gradient(#96a2bd 45%, #485777 50%, #7a87a6); }
.wb + .wb { width: 27px; }
.wb.close { width: 47px; border: 0; background: linear-gradient(#d3887b 45%, #b52d1b 50%, #dc7059); }

.nav { height: 38px; display: flex; align-items: center; padding-left: 11px; color: #333b48; }
.nav > svg { margin-right: 16.200px; }
.bar { width: 1px; height: 15px; background: #c6cbd0; }
.nav > .bar { margin-left: -2.500px; }
.nav > .globe { margin: 0 17px 0 18px; }
.url { font: 14px "Open Sans", "Noto Sans", sans-serif; color: #6d7c8b; letter-spacing: -.33px; white-space: nowrap; padding-bottom: 1px; }
.url b { font-weight: 400; color: #111; }
.nav-right { margin-left: auto; display: flex; align-items: center; gap: 10px; padding-right: 14px; }
.nav-right .bar { margin: 0 1px 0 -2px; }
.nav-right .sliders { margin-left: 8px; }

.marks { height: 32px; display: flex; align-items: center; padding: 0 26px 4px 14px; border-bottom: 1px solid #a7b4c4; font: 12px "Open Sans", "Noto Sans", sans-serif; color: #3f434a; }
.mk { width: 150px; display: flex; align-items: center; gap: 8px; white-space: nowrap; letter-spacing: -.18px; }
.n { letter-spacing: -.43px; }
.o { letter-spacing: -.33px; }
.m1 { width: 75px; }
.m2 { width: 70px; }
.more { margin-left: auto; }

.jh { height: 42px; background: #000; display: flex; align-items: center; padding-left: 12px; color: #fff; }
.brand { font: bold 21px "DejaVu Serif", serif; margin-left: 9px; width: 806px; letter-spacing: -.3px; padding-bottom: 1px; }
.search { width: 225px; height: 30px; background: #fff; border-radius: 2px; display: flex; align-items: center; padding: 0 7px 0 8px; flex: none; }
.search span { margin-left: 10px; margin-right: auto; font: 12px Roboto, sans-serif; color: #757575; letter-spacing: .15px; }
.user { margin-left: 18px; }
.jl { font: bold 12px Roboto, sans-serif; white-space: nowrap; }
.admin { margin-left: 6px; width: 54px; }
.exit { margin-left: 4px; }

.crumbs { height: 31px; background: #f8f8f8; border-bottom: 1px solid #ececec; display: flex; align-items: center; padding: 0 21px; font: bold 12px Roboto, sans-serif; color: #4d545d; white-space: nowrap; }
.crumbs i { border: 3px solid transparent; border-left: 4px solid #b9bdc0; border-right: 0; }
.c1 { width: 60px; }
.c2 { width: 149px; margin-left: 11.500px; }
.crumbs i + span:not(.c2) { margin-left: 12px; }
.crumbs .auto { margin-left: auto; }

.page { flex: 1; display: flex; font-size: 10.500px; color: #333; }
a { color: #204a87; }
a.v { color: #5c3566; }
.content a, .desc a, .side a, footer a { text-decoration: underline; }
.tasks { width: 285px; padding: 8px 0 0 13px; }
.tasks a { display: flex; height: 24px; }
.tasks svg { margin: 5px 0 0; }
.tasks a svg { width: 18px; }
.tasks span { margin-left: 4.500px; padding-top: 6px; white-space: nowrap; }
.cur { font-weight: bold; }
.left { transform: rotate(-90deg); }
.content { width: 608px; }
h1 { display: flex; font-size: 21px; margin: 27px 0 0 -1px; line-height: 28px; height: 73px; }
h1 span { margin-left: 9px; white-space: nowrap; }
.rows { display: flex; flex-direction: column; padding-left: 10px; }
.row { display: flex; align-items: center; }
.row > :first-child { width: 34px; margin-right: 13.500px; }
.r1 { height: 36px; }
.r1 p { padding-top: 2px; }
.r2 { height: 38px; }
.r3 { height: 38px; }
.r4 { height: 62px; }
.gitlogo { display: flex; align-items: center; gap: 2px; margin-left: -1px; margin-right: 14.500px !important; }
.gitlogo span { font: bold 15px "DejaVu Serif", serif; color: #413932; letter-spacing: -.9px; padding-bottom: 3px; }
ul { margin: 12px 0 0; padding-left: 30px; }
.r3 > div + div { padding-top: 2px; }
.desc { width: 156px; padding-top: 76px; display: flex; height: 89px; align-items: center; justify-content: flex-end; white-space: nowrap; padding-right: 10px; }
.side { padding-top: 22px; white-space: nowrap; margin-left: 1px; }
button { display: block; width: 148px; height: 24px; margin: 0 0 11px 2px; padding: 0; border: 1px solid #5c8aa0; background: #4b758b; color: #eee; font: bold 9px "Liberation Sans", sans-serif; }
.side p { line-height: 14px; }
footer { height: 32px; background: #f8f8f8; border-top: 1px solid #e8eeee; display: flex; align-items: center; justify-content: flex-end; padding: 0 11px 2px 0; font-size: 9px; color: #333; white-space: nowrap; }
.rest { margin: 0 11px; }

.taskbar { height: 40px; border-top: 1px solid #17233e; box-shadow: inset 0 1px #9fb1d4; display: flex; background: radial-gradient(ellipse 60px 5px at 240px 8px, rgba(50,70,130,.35), transparent), radial-gradient(ellipse 20px 5px at 990px 9px, rgba(50,70,130,.35), transparent), radial-gradient(ellipse 20px 5px at 990px 26px, rgba(50,70,130,.35), transparent), linear-gradient(90deg, #1f2d4c 0, #2c4270 110px, #3b558c 165px, #8ba5dc 182px, #8ba5dc 1040px, #6a7fae 1085px, #6a7fae 1240px, #243253 1264px); }
.start { width: 57px; padding: 0 0 0 8px; }
.slot { width: 62px; display: flex; align-items: center; justify-content: center; }
.btn { width: 59px; margin: 0 1px 0 2px; border: 1px solid #24324f; border-radius: 3px; box-shadow: inset 0 0 0 1px #d7e1f5; background: linear-gradient(150deg, #c9d5ef, #a6b9e2 45%, #8fa6d9 55%, #a5b9e4); }
.btn.bright { background: linear-gradient(#f1f5fc, #c5d1eb 55%, #dfe7f6); box-shadow: inset 0 0 0 1px #fff; }
.btn.grey { background: linear-gradient(100deg, #8992a4, #d7dae0 45%, #8797bb); }
.btn.stack { width: 52px; margin: 0 8px 0 2px; box-shadow: inset 0 0 0 1px #d7e1f5, 3px 0 #8797bb, 4px 0 #2c3a5c, 7px 0 #8ea0ca, 8px 0 #495c87; }
.tray { flex: 1; display: flex; align-items: center; color: #fff; padding-left: 110px; }
.spk { margin-left: 12px; }
.net { margin-left: 8px; }
.flag { margin-left: 8px; }
.clock { font: 11.500px/17px "Open Sans", "Noto Sans", sans-serif; text-align: center; width: 78px; letter-spacing: -.3px; margin-left: 6px; }
.desk { width: 14px; height: 39px; margin-left: auto; border: 1px solid #596887; background: linear-gradient(150deg, #5d6d8d, #1a2746 60%); }
```
